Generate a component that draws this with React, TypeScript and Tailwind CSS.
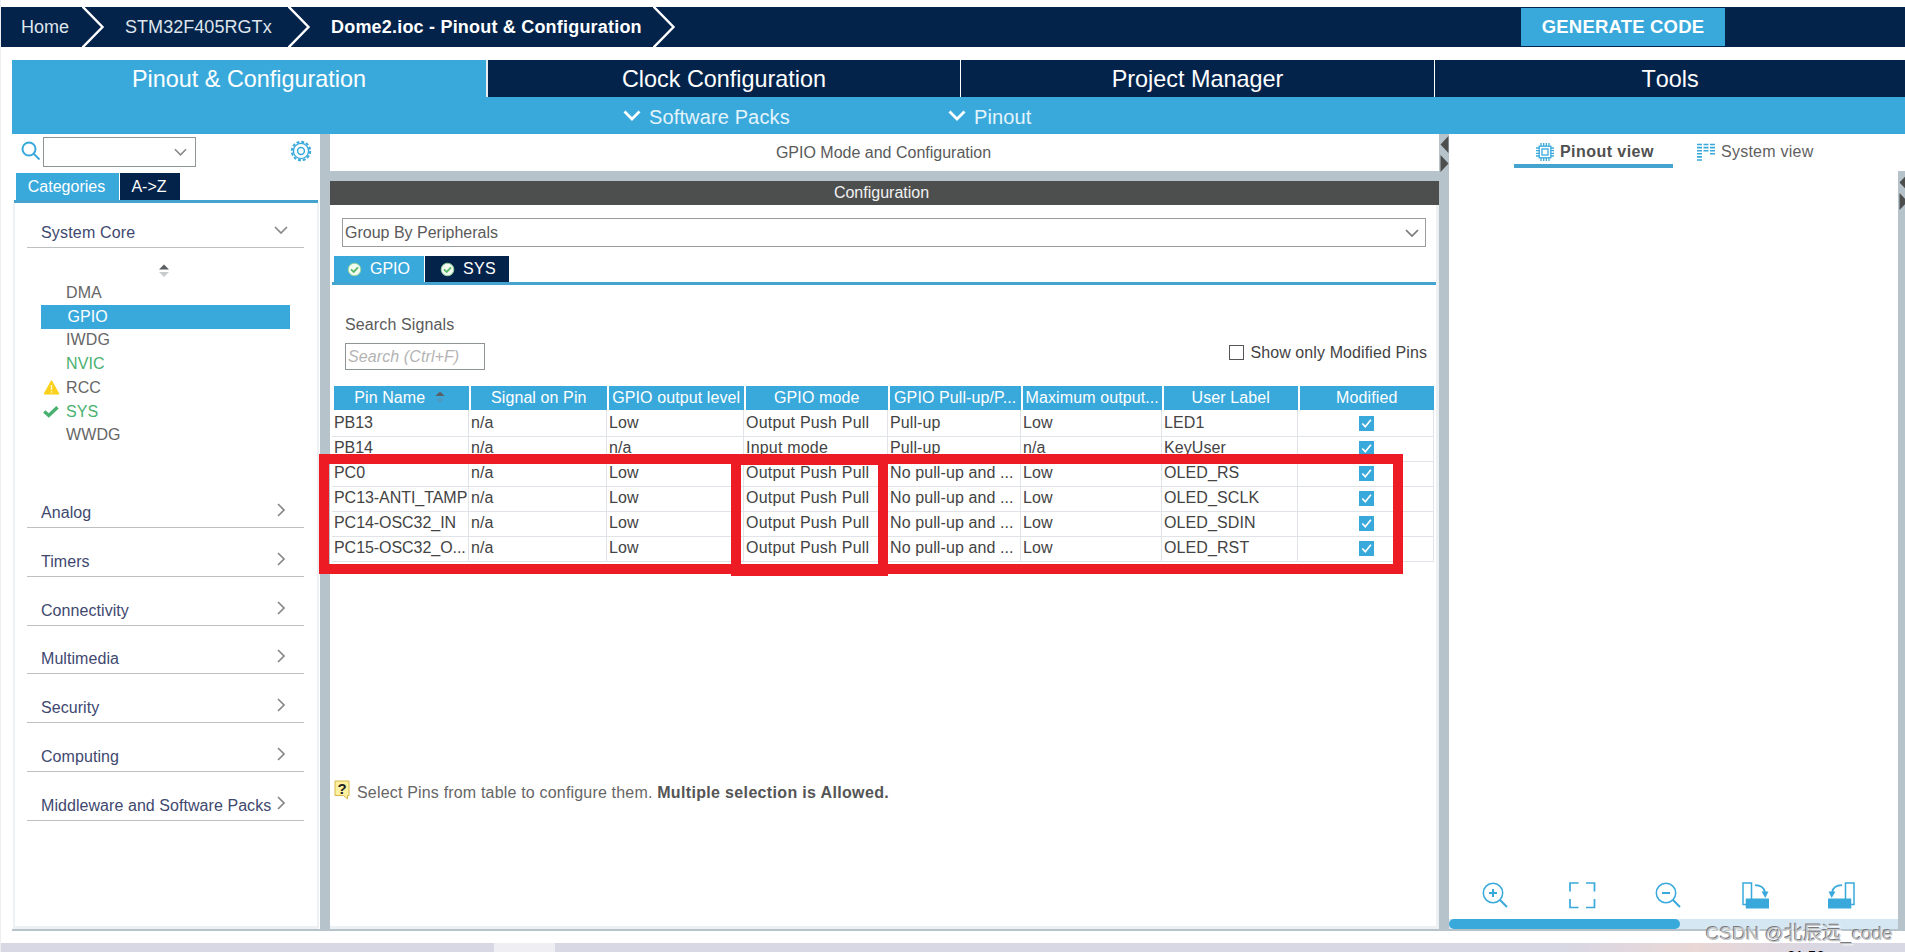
import type { FC, ReactNode } from "react";

interface PinRow {
  pin: string;
  signal: string;
  level: string;
  mode: string;
  pull: string;
  speed: string;
  label: string;
}

interface PeripheralItem {
  name: string;
  color: string;
  icon?: "warning" | "check";
}

const peripherals: PeripheralItem[] = [
  { name: "DMA", color: "text-[#666666]" },
  { name: "GPIO", color: "bg-[#39a9dc] text-white pl-[1.5px]" },
  { name: "IWDG", color: "text-[#666666]" },
  { name: "NVIC", color: "text-[#49b170]" },
  { name: "RCC", color: "text-[#666666]", icon: "warning" },
  { name: "SYS", color: "text-[#49b170]", icon: "check" },
  { name: "WWDG", color: "text-[#666666]" }
];

const categories = [
  "Analog",
  "Timers",
  "Connectivity",
  "Multimedia",
  "Security",
  "Computing",
  "Middleware and Software Packs"
];

const columns = [
  "Pin Name",
  "Signal on Pin",
  "GPIO output level",
  "GPIO mode",
  "GPIO Pull-up/P...",
  "Maximum output...",
  "User Label",
  "Modified"
];

const noPull = "No pull-up and ...";
const pushPull = "Output Push Pull";

const rows: PinRow[] = [
  { pin: "PB13", signal: "n/a", level: "Low", mode: pushPull, pull: "Pull-up", speed: "Low", label: "LED1" },
  { pin: "PB14", signal: "n/a", level: "n/a", mode: "Input mode", pull: "Pull-up", speed: "n/a", label: "KeyUser" },
  { pin: "PC0", signal: "n/a", level: "Low", mode: pushPull, pull: noPull, speed: "Low", label: "OLED_RS" },
  { pin: "PC13-ANTI_TAMP", signal: "n/a", level: "Low", mode: pushPull, pull: noPull, speed: "Low", label: "OLED_SCLK" },
  { pin: "PC14-OSC32_IN", signal: "n/a", level: "Low", mode: pushPull, pull: noPull, speed: "Low", label: "OLED_SDIN" },
  { pin: "PC15-OSC32_O...", signal: "n/a", level: "Low", mode: pushPull, pull: noPull, speed: "Low", label: "OLED_RST" }
];

const gridCols = "grid grid-cols-[137px_138px_137px_144px_133px_141px_136px_136px]";

const Chevron: FC<{ className: string }> = ({ className }) => (
  <svg viewBox="0 0 14 8" className={className} fill="none" stroke="currentColor" strokeWidth="1.7">
    <path d="M1 1l6 6 6-6" />
  </svg>
);

const CrumbArrow: FC = () => (
  <svg viewBox="0 0 24 40" className="w-6 h-10 shrink-0" fill="none" stroke="white" strokeWidth="2.4">
    <path d="M0.5 -0.5l20 20.5-20 20.5" />
  </svg>
);

const SubMenu: FC<{ children: ReactNode }> = ({ children }) => (
  <div className="flex items-center gap-2">
    <svg viewBox="0 0 18 11" className="w-[18px] h-[11px]" fill="none" stroke="white" strokeWidth="2.8">
      <path d="M1.500 1.500L9 9l7.500-7.500" />
    </svg>
    <span className="pt-[2px] text-[20px] tracking-[0.13px] text-[#e4f4fb]">{children}</span>
  </div>
);

const SplitArrows: FC = () => (
  <svg viewBox="0 0 9 36" className="w-[9px] h-9" fill="#4d4f4f">
    <path d="M8.500 0v17L0.500 8.500zM0.500 19v17l8-8.500z" />
  </svg>
);

const StatusDot: FC = () => (
  <svg viewBox="0 0 15 15" className="w-[15px] h-[15px]">
    <circle cx="7.500" cy="7.500" r="6.300" fill="#f4fbef" stroke="#8fcf9a" strokeWidth="1" />
    <path d="M4 7.300l2.700 2.600 4.300-4.600" fill="none" stroke="#57b867" strokeWidth="1.800" />
  </svg>
);

const CheckedBox: FC = () => (
  <svg viewBox="0 0 15 15" className="w-[15px] h-[15px]">
    <rect width="15" height="15" fill="#39a9dc" />
    <path d="M3.300 7.500l3 3.200 5.600-7" fill="none" stroke="white" strokeWidth="1.700" />
  </svg>
);

const SortArrows: FC<{ className: string; down: string }> = ({ className, down }) => (
  <svg viewBox="0 0 10 13" className={className}>
    <path d="M0 5.500L5 0.500l5 5z" fill="#5a5f63" />
    <path d="M0 8h10l-5 5z" fill={down} />
  </svg>
);

const Gear: FC = () => (
  <svg viewBox="0 0 22 22" className="w-[22px] h-[22px]" fill="none" stroke="#39a9dc">
    <circle cx="11" cy="11" r="9.200" strokeWidth="2" strokeDasharray="2.900 1.917" />
    <circle cx="11" cy="11" r="7.600" strokeWidth="1.400" />
    <circle cx="11" cy="11" r="3.400" strokeWidth="1.500" />
  </svg>
);

const TopBar: FC = () => (
  <header className="mt-[7px] h-10 shrink-0 bg-[#03234b] text-white flex items-center text-[18px]">
    <span className="w-[82px] pl-[21px] text-[#dfe5ec]">Home</span>
    <CrumbArrow />
    <span className="w-[182px] pl-[19px] text-[#dfe5ec] tracking-[0.05px]">STM32F405RGTx</span>
    <CrumbArrow />
    <span className="w-[341px] pl-[19px] font-bold whitespace-nowrap tracking-[0.2px]">
      Dome2.ioc - Pinout &amp; Configuration
    </span>
    <CrumbArrow />
    <button className="ml-auto mr-[180px] w-[204px] h-[38px] bg-[#39a9dc] font-bold text-[18.500px] tracking-[0.2px]">
      GENERATE CODE
    </button>
  </header>
);

const MainTabs: FC = () => (
  <nav className="mt-[13px] ml-3 shrink-0 bg-[#39a9dc] text-white [font-kerning:none]">
    <div className="h-[37px] flex text-[23.400px] [&>div]:flex [&>div]:items-center [&>div]:justify-center [&>div]:pt-[2px]">
      <div className="w-[474px]">Pinout &amp; Configuration</div>
      <div className="w-[474px] bg-[#03234b] border-l-2 border-[#e8edf2]">Clock Configuration</div>
      <div className="w-[474px] bg-[#03234b] border-l border-white">Project Manager</div>
      <div className="flex-1 bg-[#03234b] border-l border-white">Tools</div>
    </div>
    <div className="h-[37px] flex items-center pl-[611px]">
      <div className="w-[325px]">
        <SubMenu>Software Packs</SubMenu>
      </div>
      <SubMenu>Pinout</SubMenu>
    </div>
  </nav>
);

const Sidebar: FC = () => (
  <aside className="w-[308px] shrink-0 flex flex-col">
    <div className="h-[39px] flex pt-[3px] pl-[9px]">
      <svg viewBox="0 0 20 20" className="w-5 h-5 mt-[4px]" fill="none" stroke="#39a9dc" strokeWidth="2">
        <circle cx="8" cy="8" r="6.500" />
        <path d="M12.500 12.500l6 6" />
      </svg>
      <div className="ml-[2px] w-[153px] h-[30px] border border-[#8f9497] flex items-center justify-end pr-2">
        <Chevron className="w-[13px] h-2 text-[#888888]" />
      </div>
      <div className="ml-[94px] mt-[3px]">
        <Gear />
      </div>
    </div>
    <div className="h-[27px] flex ml-1 text-white text-base">
      <div className="w-[103px] bg-[#39a9dc] pr-[2px] text-center leading-[27px]">Categories</div>
      <div className="ml-px w-[60px] bg-[#03234b] pr-[2px] text-center leading-[27px]">A-&gt;Z</div>
    </div>
    <div className="h-[3px] ml-[2px] mr-[2px] bg-[#45a3d0]" />
    <div className="flex-1 ml-px mr-px border-x-2 border-b-[3px] border-[#eef1f3] pl-3 pr-[13px] text-[#40486f] text-base">
      <div className="h-[45px] flex items-start justify-between border-b border-[#bcc0c3] pl-[14px] pr-4">
        <span className="pt-[18px] tracking-[0.180px]">System Core</span>
        <Chevron className="w-[14px] h-2 mt-[23px] text-[#888888]" />
      </div>
      <div className="h-[57px] pt-4 pl-[132px]">
        <SortArrows className="w-[10px] h-[13px]" down="#c9cccd" />
      </div>
      <ul className="-mt-[24px] ml-[14px] w-[249px] text-[16px]">
        {peripherals.map(item => (
          <li key={item.name} className={`${item.color} h-[23.750px] flex items-center tracking-[0.1px]`}>
            <span className="w-[25px] pl-[2px]">
              {item.icon === "warning" && (
                <svg viewBox="0 0 17 15" className="w-[17px] h-[15px]">
                  <path d="M8.500 1.200L15.500 13.800h-14z" fill="#fbd11c" stroke="#fbd11c" strokeWidth="1.500" strokeLinejoin="round" />
                  <path d="M8.500 5v5M8.500 11.200v1.500" stroke="#fff6cc" strokeWidth="1.400" />
                </svg>
              )}
              {item.icon === "check" && (
                <svg viewBox="0 0 16 12" className="w-4 h-3" fill="none" stroke="#49b170" strokeWidth="3.400">
                  <path d="M1.300 5.500l4.500 4L14.500 1.200" />
                </svg>
              )}
            </span>
            {item.name}
          </li>
        ))}
      </ul>
      <div className="mt-[32px]">
        {categories.map(name => (
          <div key={name} className="h-[48.750px] flex items-end justify-between border-b border-[#bcc0c3] pl-[14px] pr-[19px] pb-[2px]">
            <span className="whitespace-nowrap tracking-[0.06px]">{name}</span>
            <Chevron className="w-[14px] h-2 -rotate-90 -mr-[3px] mb-[11px] text-[#888888] shrink-0" />
          </div>
        ))}
      </div>
    </div>
  </aside>
);

const PinTable: FC = () => (
  <div className="mt-4 ml-[2px] w-[1102px] text-base tracking-[0.100px]">
    <div className={`${gridCols} h-6 text-white`}>
      {columns.map((name, i) => (
        <div key={name} className="pl-[2px] pr-[0.500px] h-6 overflow-hidden">
          <div className="h-6 bg-[#39a9dc] flex items-center justify-center whitespace-nowrap">
            {name}
            {i === 0 && <SortArrows className="w-[10px] h-[12px] ml-[10px] mr-[3px] -mt-[3px] shrink-0" down="#4a9cc4" />}
          </div>
        </div>
      ))}
    </div>
    <div>
      {rows.map(row => (
        <div
          key={row.pin}
          className={`${gridCols} h-[25px] leading-[26px] text-[#434343] [&>div]:border-r [&>div]:border-b [&>div]:border-[#e0e3e8] [&>div]:pl-[2px] [&>div]:whitespace-nowrap`}
        >
          <div className="tracking-[-0.05px]">{row.pin}</div>
          <div>{row.signal}</div>
          <div>{row.level}</div>
          <div className="tracking-[0.2px]">{row.mode}</div>
          <div>{row.pull}</div>
          <div>{row.speed}</div>
          <div>{row.label}</div>
          <div className="flex items-center justify-center">
            <CheckedBox />
          </div>
        </div>
      ))}
    </div>
  </div>
);

const ConfigPanel: FC = () => (
  <section className="w-[1109px] shrink-0 flex flex-col text-base text-[#5a5a5a]">
    <div className="h-[37px] pr-[2px] flex items-center justify-center">GPIO Mode and Configuration</div>
    <div className="h-[10px] bg-[#b7c3ca]" />
    <div className="h-6 pr-[6px] bg-[#4d4f4f] text-[#f2f2f2] flex items-center justify-center">Configuration</div>
    <div className="flex-1 border-r-[3px] border-b-[3px] border-[#eef1f3]">
      <div className="mt-[13px] ml-3 w-[1084px] h-[29px] border border-[#999c9f] flex items-center justify-between pl-[2px] pr-[6px]">
        <span>Group By Peripherals</span>
        <Chevron className="w-[14px] h-2 text-[#777777]" />
      </div>
      <div className="mt-[9px] ml-1 h-[26px] flex text-white">
        <div className="w-[90px] bg-[#39a9dc] flex items-center pl-[13px] gap-2">
          <StatusDot />
          GPIO
        </div>
        <div className="ml-px w-[84px] bg-[#03234b] flex items-center pl-[15px] gap-2 tracking-[0.3px]">
          <StatusDot />
          SYS
        </div>
      </div>
      <div className="h-[3px] ml-[2px] bg-[#45a3d0]" />
      <div className="mt-[28px] ml-[15px] tracking-[0.130px]">Search Signals</div>
      <div className="h-[33px] flex justify-between pl-[15px]">
        <div className="mt-[6px] w-[140px] h-[27px] border border-[#8f9497] pl-[2px] leading-[26px] italic text-[#b4b4b4] tracking-[0.1px]">
          Search (Ctrl+F)
        </div>
        <label className="mt-[4px] mr-[9px] flex h-6 items-center gap-[6px] tracking-[0.1px] text-[#434343]">
          <span className="w-[15px] h-[15px] -mt-px border border-[#555555]" />
          Show only Modified Pins
        </label>
      </div>
      <PinTable />
      <div className="mt-[220px] ml-1 flex">
        <svg viewBox="0 0 16 20" className="w-4 h-5 shrink-0">
          <path d="M1 1h14v14.500h-1.500v3.500l-4-3.500H1z" fill="#fdf1a0" stroke="#d9b64a" strokeWidth="1" />
          <text x="8" y="13.500" textAnchor="middle" fontSize="15" fontWeight="bold" fill="#222222">?</text>
        </svg>
        <p className="mt-[1px] ml-[7px] whitespace-nowrap text-[#666666] tracking-[0.180px]">
          Select Pins from table to configure them.{" "}
          <b className="text-[#555555] tracking-[0.34px]">Multiple selection is Allowed.</b>
        </p>
      </div>
    </div>
  </section>
);

const ChipIcon: FC = () => (
  <svg viewBox="0 0 18 18" className="w-[18px] h-[18px]" fill="none" stroke="#39a9dc" strokeWidth="1.300">
    <rect x="3.200" y="3.200" width="11.600" height="11.600" />
    <rect x="6" y="6" width="6" height="6" />
    <path d="M5 0v3M7.700 0v3M10.300 0v3M13 0v3M5 15v3M7.700 15v3M10.300 15v3M13 15v3M0 5h3M0 7.700h3M0 10.300h3M0 13h3M15 5h3M15 7.700h3M15 10.300h3M15 13h3" />
  </svg>
);

const SystemIcon: FC = () => (
  <svg viewBox="0 0 18 18" className="w-[18px] h-[18px]" fill="none" stroke="#39a9dc" strokeWidth="5">
    <path d="M2.500 0.700v17" strokeDasharray="1.600 1.500" />
    <path d="M9 0.700v8.500" strokeDasharray="1.600 1.500" />
    <path d="M15.500 0.700v11" strokeDasharray="1.600 1.500" />
  </svg>
);

const Magnifier: FC<{ plus?: boolean }> = ({ plus }) => (
  <svg viewBox="0 0 27 27" className="w-[27px] h-[27px]" fill="none" stroke="#39a9dc" strokeWidth="1.500">
    <circle cx="11" cy="11" r="9.700" />
    <path d="M18 18l7 7" strokeWidth="1.900" />
    <path d={plus ? "M7 11h8M11 7v8" : "M7 11h8"} strokeWidth="2" />
  </svg>
);

const RotateIcon: FC<{ className?: string }> = ({ className }) => (
  <svg viewBox="0 0 27 27" className={`w-[27px] h-[27px] ${className ?? ""}`} fill="none" stroke="#39a9dc" strokeWidth="1.500">
    <path d="M9.500 17V1H1v21.500h3.500" />
    <path d="M4.500 17.200H26.300v8.500H4.500z" fill="#39a9dc" />
    <path d="M13 3.200c5.500 0 9 2.500 9.800 7" strokeWidth="1.800" />
    <path d="M19.500 9.500h7l-3.200 6.500z" fill="#39a9dc" stroke="none" />
  </svg>
);

const PinoutPanel: FC = () => (
  <section className="flex-1 flex flex-col text-base text-[#5f5f5f]">
    <div className="flex h-[37px]">
      <div className="ml-[65px] w-[159px] h-[34px] pt-[6px] border-b-4 border-[#45a3d0] flex items-center pl-[22px] gap-[6px] font-bold text-[#505050] tracking-[0.450px] whitespace-nowrap">
        <ChipIcon />
        Pinout view
      </div>
      <div className="ml-6 h-[30px] pt-[6px] flex items-center gap-[6px] tracking-[0.250px]">
        <SystemIcon />
        System view
      </div>
    </div>
    <div className="flex-1 flex">
      <div className="flex-1 flex flex-col justify-end">
        <div className="flex justify-between pl-[33px] pr-[43px] mb-[10px]">
          <Magnifier plus />
          <svg viewBox="0 0 27 27" className="w-[27px] h-[27px]" fill="none" stroke="#39a9dc" strokeWidth="1.700">
            <path d="M1 9.500V1h8.500M17 1h8.500v8.500M25.500 17v8.500H17M9.500 25.500H1V17" />
          </svg>
          <Magnifier />
          <RotateIcon />
          <RotateIcon className="-scale-x-100" />
        </div>
        <div className="h-[10px] bg-[#d6e7f4]">
          <div className="w-[231px] h-[10px] rounded-full bg-[#39a9dc]" />
        </div>
      </div>
      <div className="w-[7px] bg-[#b7c3ca] pt-[3px] pl-px overflow-hidden">
        <SplitArrows />
      </div>
    </div>
  </section>
);

export default function App() {
  return (
    <div className="relative w-[1905px] h-[952px] overflow-hidden bg-white flex flex-col border-l border-[#ededf2] font-['Liberation_Sans','Noto_Sans_CJK_SC',sans-serif]">
      <div className="-ml-px flex flex-col h-full">
        <TopBar />
        <MainTabs />
        <main className="ml-3 h-[795px] flex">
          <Sidebar />
          <div className="w-[10px] shrink-0 bg-[#b7c3ca]" />
          <ConfigPanel />
          <div className="w-[10px] shrink-0 bg-[#b7c3ca] pt-[2px] pl-px">
            <SplitArrows />
          </div>
          <PinoutPanel />
        </main>
        <div className="ml-3 h-[2px] bg-[#b7c3ca]" />
        {/* desktop taskbar showing under the window */}
        <div className="mt-auto h-[9px] flex overflow-hidden bg-linear-to-r from-[#d8d7e4] from-82% via-[#ead7d6] via-89% to-[#d8d7e4] to-96%">
          <div className="ml-[494px] w-[61px] bg-[#efeef3]" />
          <span className="ml-[1232px] mt-[5px] text-[15px] leading-4 text-black">21:56</span>
        </div>
      </div>

      {/* annotation frames */}
      <div className="absolute left-[318px] top-[454px] w-[1084px] h-[120px] border-[10px] border-[#ed1c24]" />
      <div className="absolute left-[730px] top-[454px] w-[157px] h-[122px] border-[10px] border-b-[12px] border-t-[11px] border-[#ed1c24]" />
      <div className="absolute left-[1705px] top-[921px] text-[19px] leading-[26px] whitespace-nowrap text-[#c4c6c8] [text-shadow:-1px_-1px_0_#77797c,1px_1px_1px_#ffffff]">
        CSDN @北辰远_code
      </div>
    </div>
  );
}
